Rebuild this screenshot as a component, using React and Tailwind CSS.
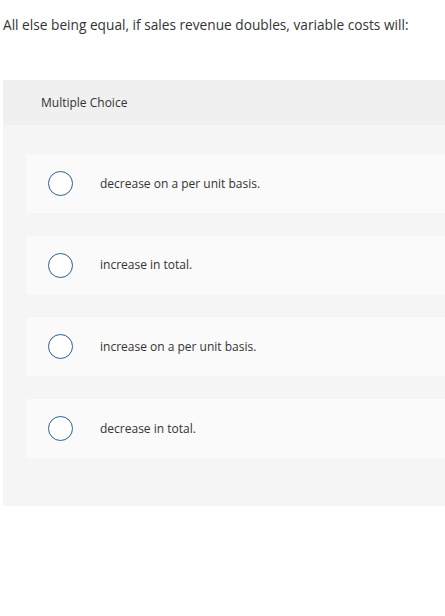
export default function App() {
  const options = [
    "decrease on a per unit basis.",
    "increase in total.",
    "increase on a per unit basis.",
    "decrease in total.",
  ];
  return (
    <div className="w-[445px] h-[616px] bg-white overflow-hidden text-[#333]" style={{ fontFamily: "'Open Sans', Arial, sans-serif" }}>
      <p className="pl-[3px] pt-[15px] text-[13.7px] leading-[20px] whitespace-nowrap">
        All else being equal, if sales revenue doubles, variable costs will:
      </p>
      <div className="ml-[3px] mt-[45px] w-[460px] bg-[#f5f5f5] rounded-tl-[2px] rounded-bl-[2px]">
        <div className="h-[45px] bg-[#f0f0f0] flex items-center pl-[38px] text-[12px]">
          Multiple Choice
        </div>
        <div className="flex flex-col gap-[22.7px] pl-[23px] pt-[29px] pb-[48px]">
          {options.map((o) => (
            <div key={o} className="h-[59px] bg-[#fafafa] rounded-[3px] flex items-center">
              <div className="ml-[22px] w-[25px] h-[25px] rounded-full border-[1.5px] border-[#2e5f8f] bg-white shrink-0"></div>
              <span className="ml-[27px] text-[12px]">{o}</span>
            </div>
          ))}
        </div>
      </div>
    </div>
  );
}
